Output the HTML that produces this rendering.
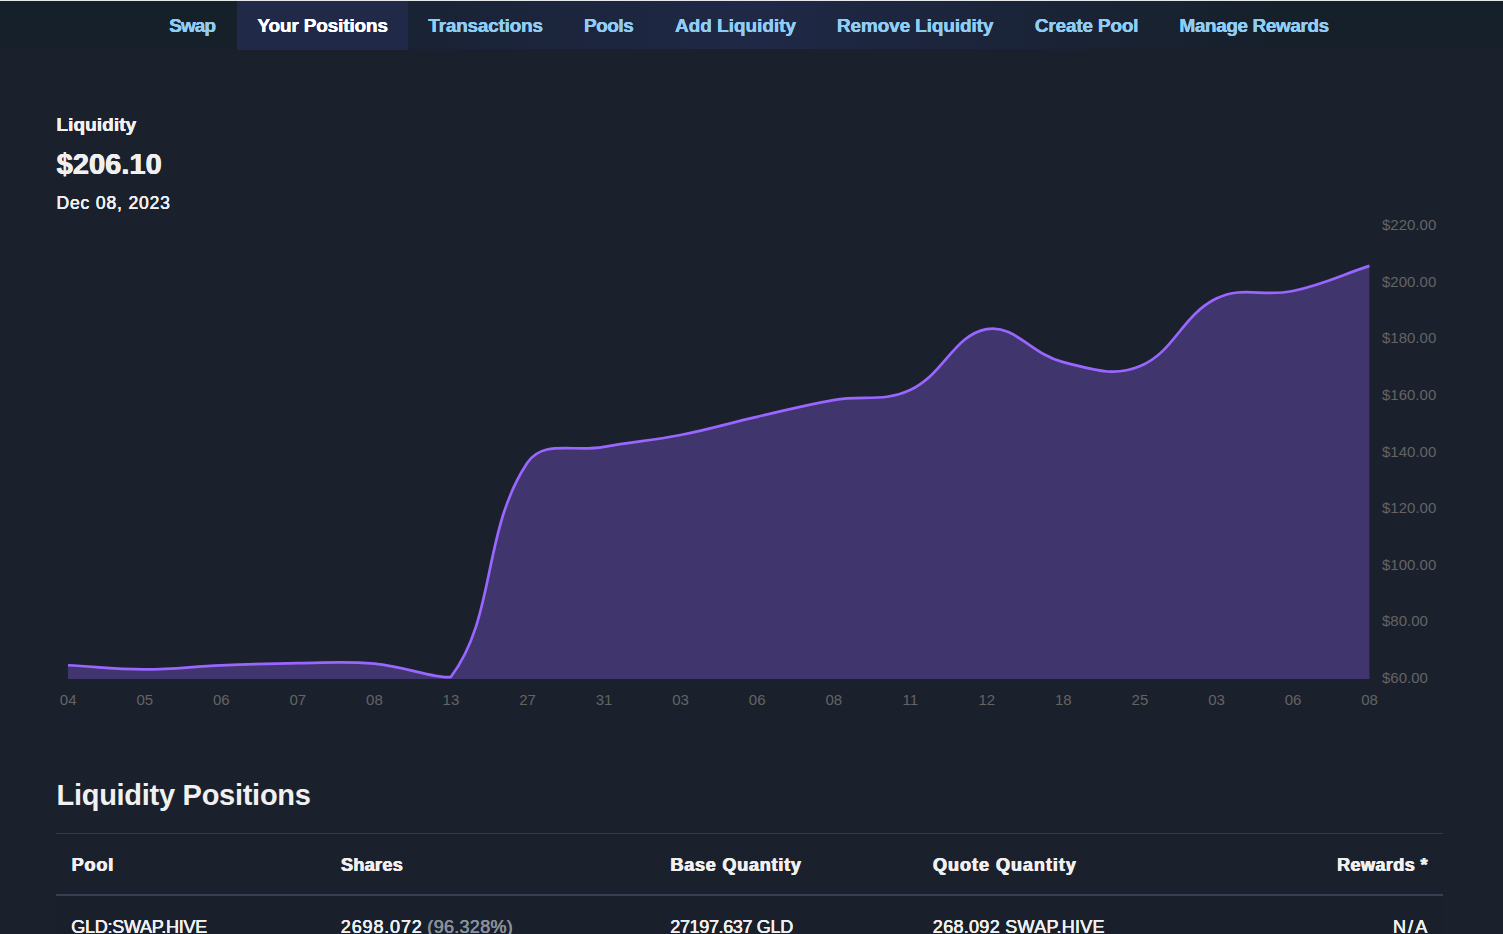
<!DOCTYPE html>
<html lang="en"><head><meta charset="utf-8"><title>Your Positions</title>
<style>
html,body{margin:0;padding:0}
body{width:1503px;height:934px;overflow:hidden;background:#1b202d;font-family:"Liberation Sans",sans-serif;position:relative}
.topline{position:absolute;left:0;top:0;width:100%;height:1px;background:#e6e9ec}
.nav{position:absolute;left:0;top:1px;width:100%;height:48px;background:linear-gradient(90deg,#16202a 0%,#16202a 14%,#1f2846 50%,#16202a 86%,#16202a 100%)}
.active{position:absolute;left:237px;top:1px;width:171px;height:49px;background:#212949}
.t{position:absolute;white-space:nowrap;line-height:40px;margin:0;padding:0;text-decoration:none;display:block}
.chart{position:absolute;left:0;top:0}
.bt{position:absolute;left:56px;width:1387px;top:833px;height:1px;background:#2f3a4d}
.bh{position:absolute;left:56px;width:1387px;top:894px;height:2px;background:#364052}
.row{position:absolute;left:56px;width:1387px;top:896px;height:38px;background:#1a1f2c}
</style></head><body>
<div class="topline"></div>
<div class="nav"></div>
<div class="active"></div>
<svg class="chart" width="1503" height="934" viewBox="0 0 1503 934">
<path d="M68.00 665.25 C98.62 666.89 113.93 669.33 144.55 669.35 C175.17 669.37 190.47 666.59 221.11 665.35 C251.71 664.11 267.03 663.49 297.66 663.15 C328.27 662.81 343.82 660.89 374.21 663.65 C405.06 666.45 435.17 679.00 450.76 677.05 C496.41 617.18 481.74 531.37 527.32 462.85 C542.99 439.29 573.10 452.44 603.87 446.85 C634.34 441.32 650.04 441.00 680.42 435.05 C711.29 429.00 726.29 423.86 756.98 416.85 C787.54 409.86 802.68 405.45 833.53 400.05 C863.92 394.73 883.07 402.56 910.08 390.05 C944.31 374.20 953.57 335.18 986.64 329.15 C1014.81 324.02 1031.29 354.40 1063.19 362.15 C1092.53 369.28 1113.50 377.25 1139.74 366.35 C1174.74 351.81 1181.34 315.76 1216.29 298.55 C1242.59 285.60 1262.93 297.34 1292.85 290.95 C1324.17 284.26 1338.78 275.89 1369.40 265.85 L1369.40 679.00 L68.00 679.00 Z" fill="rgba(153,102,255,0.3)"/>
<path d="M68.00 665.25 C98.62 666.89 113.93 669.33 144.55 669.35 C175.17 669.37 190.47 666.59 221.11 665.35 C251.71 664.11 267.03 663.49 297.66 663.15 C328.27 662.81 343.82 660.89 374.21 663.65 C405.06 666.45 435.17 679.00 450.76 677.05 C496.41 617.18 481.74 531.37 527.32 462.85 C542.99 439.29 573.10 452.44 603.87 446.85 C634.34 441.32 650.04 441.00 680.42 435.05 C711.29 429.00 726.29 423.86 756.98 416.85 C787.54 409.86 802.68 405.45 833.53 400.05 C863.92 394.73 883.07 402.56 910.08 390.05 C944.31 374.20 953.57 335.18 986.64 329.15 C1014.81 324.02 1031.29 354.40 1063.19 362.15 C1092.53 369.28 1113.50 377.25 1139.74 366.35 C1174.74 351.81 1181.34 315.76 1216.29 298.55 C1242.59 285.60 1262.93 297.34 1292.85 290.95 C1324.17 284.26 1338.78 275.89 1369.40 265.85" fill="none" stroke="#9966ff" stroke-width="2.7" stroke-linejoin="round"/>
<g font-family="Liberation Sans, sans-serif" font-size="15" fill="#646464">
<text x="68.20" y="705" text-anchor="middle">04</text>
<text x="144.75" y="705" text-anchor="middle">05</text>
<text x="221.31" y="705" text-anchor="middle">06</text>
<text x="297.86" y="705" text-anchor="middle">07</text>
<text x="374.41" y="705" text-anchor="middle">08</text>
<text x="450.96" y="705" text-anchor="middle">13</text>
<text x="527.52" y="705" text-anchor="middle">27</text>
<text x="604.07" y="705" text-anchor="middle">31</text>
<text x="680.62" y="705" text-anchor="middle">03</text>
<text x="757.18" y="705" text-anchor="middle">06</text>
<text x="833.73" y="705" text-anchor="middle">08</text>
<text x="910.28" y="705" text-anchor="middle">11</text>
<text x="986.84" y="705" text-anchor="middle">12</text>
<text x="1063.39" y="705" text-anchor="middle">18</text>
<text x="1139.94" y="705" text-anchor="middle">25</text>
<text x="1216.49" y="705" text-anchor="middle">03</text>
<text x="1293.05" y="705" text-anchor="middle">06</text>
<text x="1369.60" y="705" text-anchor="middle">08</text>
<text x="1382" y="230">$220.00</text>
<text x="1382" y="287">$200.00</text>
<text x="1382" y="343">$180.00</text>
<text x="1382" y="400">$160.00</text>
<text x="1382" y="457">$140.00</text>
<text x="1382" y="513">$120.00</text>
<text x="1382" y="570">$100.00</text>
<text x="1382" y="626">$80.00</text>
<text x="1382" y="683">$60.00</text>
</g></svg>
<div class="bt"></div><div class="bh"></div><div class="row"></div>
<nav aria-label="Liquidity pool navigation">
<a class="t" id="n1" href="#" style="left:169.20px;top:6px;font-size:19px;font-weight:700;color:#90cdf4;letter-spacing:-0.942px;text-shadow:0.1px 0 #90cdf4,-0.1px 0 #90cdf4">Swap</a>
<a class="t" id="n2" href="#" aria-current="page" style="left:257.40px;top:6px;font-size:19px;font-weight:700;color:#ffffff;letter-spacing:-0.159px;text-shadow:0.1px 0 #ffffff,-0.1px 0 #ffffff">Your Positions</a>
<a class="t" id="n3" href="#" style="left:428.30px;top:6px;font-size:19px;font-weight:700;color:#90cdf4;letter-spacing:-0.229px;text-shadow:0.1px 0 #90cdf4,-0.1px 0 #90cdf4">Transactions</a>
<a class="t" id="n4" href="#" style="left:584.00px;top:6px;font-size:19px;font-weight:700;color:#90cdf4;letter-spacing:-0.509px;text-shadow:0.1px 0 #90cdf4,-0.1px 0 #90cdf4">Pools</a>
<a class="t" id="n5" href="#" style="left:675.00px;top:6px;font-size:19px;font-weight:700;color:#90cdf4;letter-spacing:-0.031px;text-shadow:0.1px 0 #90cdf4,-0.1px 0 #90cdf4">Add Liquidity</a>
<a class="t" id="n6" href="#" style="left:836.90px;top:6px;font-size:19px;font-weight:700;color:#90cdf4;letter-spacing:-0.124px;text-shadow:0.1px 0 #90cdf4,-0.1px 0 #90cdf4">Remove Liquidity</a>
<a class="t" id="n7" href="#" style="left:1034.80px;top:6px;font-size:19px;font-weight:700;color:#90cdf4;letter-spacing:-0.189px;text-shadow:0.1px 0 #90cdf4,-0.1px 0 #90cdf4">Create Pool</a>
<a class="t" id="n8" href="#" style="left:1179.40px;top:6px;font-size:19px;font-weight:700;color:#90cdf4;letter-spacing:-0.418px;text-shadow:0.1px 0 #90cdf4,-0.1px 0 #90cdf4">Manage Rewards</a>
</nav>
<header>
<h5 class="t" id="h1" style="left:56.45px;top:105px;font-size:19px;font-weight:700;color:#f0f0f0;letter-spacing:0.080px;text-shadow:0.15px 0 #f0f0f0,-0.15px 0 #f0f0f0">Liquidity</h5>
<h3 class="t" id="h2" style="left:56.70px;top:144px;font-size:29px;font-weight:700;color:#f0f0f0;letter-spacing:0.029px;text-shadow:0.4px 0 #f0f0f0,-0.4px 0 #f0f0f0">$206.10</h3>
<p class="t" id="h3" style="left:56.50px;top:183px;font-size:17.5px;font-weight:400;color:#f0f0f0;letter-spacing:0.845px;text-shadow:0.2px 0 #f0f0f0,-0.2px 0 #f0f0f0">Dec 08, 2023</p>
</header>
<section>
<h2 class="t" id="t0" style="left:56.50px;top:775px;font-size:29px;font-weight:700;color:#f0f0f0;letter-spacing:-0.277px">Liquidity Positions</h2>
<div role="table" aria-label="Liquidity Positions">
<div role="row">
<div class="t" id="c1" role="columnheader" style="left:71.65px;top:845px;font-size:18px;font-weight:700;color:#f0f0f0;letter-spacing:0.867px;text-shadow:0.45px 0 #f0f0f0,-0.45px 0 #f0f0f0">Pool</div>
<div class="t" id="c2" role="columnheader" style="left:341.05px;top:845px;font-size:18px;font-weight:700;color:#f0f0f0;letter-spacing:0.331px;text-shadow:0.45px 0 #f0f0f0,-0.45px 0 #f0f0f0">Shares</div>
<div class="t" id="c3" role="columnheader" style="left:670.45px;top:845px;font-size:18px;font-weight:700;color:#f0f0f0;letter-spacing:0.788px;text-shadow:0.45px 0 #f0f0f0,-0.45px 0 #f0f0f0">Base Quantity</div>
<div class="t" id="c4" role="columnheader" style="left:933.05px;top:845px;font-size:18px;font-weight:700;color:#f0f0f0;letter-spacing:0.985px;text-shadow:0.45px 0 #f0f0f0,-0.45px 0 #f0f0f0">Quote Quantity</div>
<div class="t" id="c5" role="columnheader" style="left:1337.15px;top:845px;font-size:18px;font-weight:700;color:#f0f0f0;letter-spacing:0.419px;text-shadow:0.45px 0 #f0f0f0,-0.45px 0 #f0f0f0">Rewards *</div>
</div>
<div role="row">
<div class="t" id="r1" role="cell" style="left:71.35px;top:907px;font-size:18px;font-weight:400;color:#f0f0f0;letter-spacing:-0.271px;text-shadow:0.25px 0 #f0f0f0,-0.25px 0 #f0f0f0">GLD:SWAP.HIVE</div>
<div role="cell"><span class="t" id="r2" style="left:340.85px;top:907px;font-size:18px;font-weight:400;color:#f0f0f0;letter-spacing:0.846px;text-shadow:0.25px 0 #f0f0f0,-0.25px 0 #f0f0f0">2698.072</span><span class="t" id="r2b" style="left:427.35px;top:907px;font-size:18px;font-weight:400;color:#8a8f98;letter-spacing:0.292px;text-shadow:0.25px 0 #8a8f98,-0.25px 0 #8a8f98">(96.328%)</span></div>
<div class="t" id="r3" role="cell" style="left:670.25px;top:907px;font-size:18px;font-weight:400;color:#f0f0f0;letter-spacing:-0.351px;text-shadow:0.25px 0 #f0f0f0,-0.25px 0 #f0f0f0">27197.637 GLD</div>
<div class="t" id="r4" role="cell" style="left:932.85px;top:907px;font-size:18px;font-weight:400;color:#f0f0f0;letter-spacing:0.293px;text-shadow:0.25px 0 #f0f0f0,-0.25px 0 #f0f0f0">268.092 SWAP.HIVE</div>
<div class="t" id="r5" role="cell" style="left:1392.95px;top:907px;font-size:18px;font-weight:400;color:#f0f0f0;letter-spacing:2.142px;text-shadow:0.25px 0 #f0f0f0,-0.25px 0 #f0f0f0">N/A</div>
</div>
</div>
</section>
</body></html>
